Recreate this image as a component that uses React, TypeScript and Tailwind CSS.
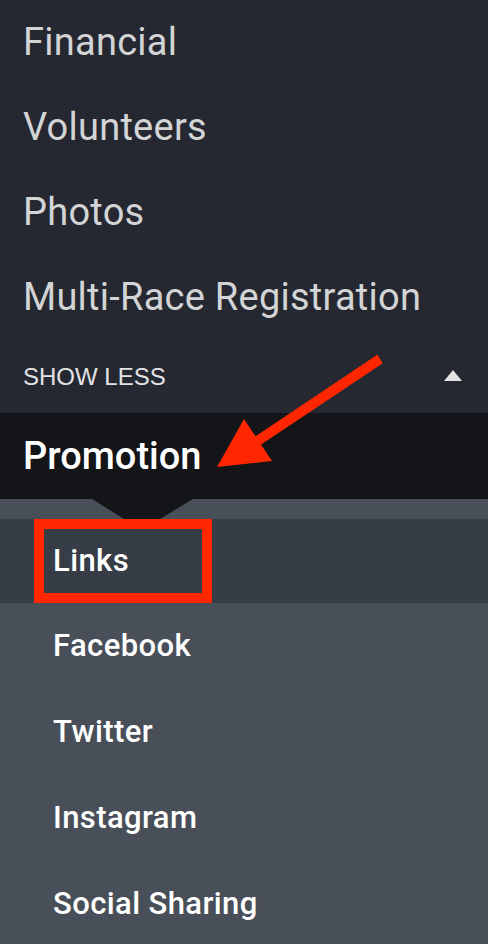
import { ReactNode } from "react";

const topItems = ["Financial", "Volunteers", "Photos", "Multi-Race Registration"];
const subItems = ["Facebook", "Twitter", "Instagram", "Social Sharing"];

function TopRow({ children }: { children: ReactNode }) {
    return (
        <div className="h-[85px] flex items-center pl-[23px] text-[38px] text-[#d3d4d6] tracking-[0.25px]">
            {children}
        </div>
    );
}

function SubRow({ children }: { children: ReactNode }) {
    return (
        <div className="h-[86px] flex items-center pl-[53px] text-[31px] font-medium text-white tracking-[0.4px]">
            {children}
        </div>
    );
}

export default function App() {
    return (
        <div
            className="relative w-[488px] h-[944px] overflow-hidden bg-[#494f59]"
            style={{ fontFamily: "Roboto, 'Liberation Sans', sans-serif" }}
        >
            {/* main nav */}
            <div className="bg-[#252830]">
                {topItems.map((t) => (
                    <TopRow key={t}>{t}</TopRow>
                ))}
                <div className="h-[73px] flex items-center justify-between pl-[23px] pr-[26px]">
                    <span
                        className="text-[24px] text-[#e2e3e5]"
                        style={{ fontFamily: "'Liberation Sans', Arial, sans-serif" }}
                    >
                        SHOW LESS
                    </span>
                    <svg width="18" height="11" viewBox="0 0 18 11" className="mb-[2px]">
                        <polygon points="9,0 18,11 0,11" fill="#e4e4e4" />
                    </svg>
                </div>
            </div>

            {/* active section */}
            <div className="h-[86px] bg-[#141519] flex items-center pl-[23px] text-[38px] font-medium text-white">
                Promotion
            </div>

            {/* notch strip */}
            <div className="h-[20px] bg-[#494f59]">
                <svg width="488" height="20" viewBox="0 0 488 20" className="block">
                    <polygon points="92,0 193,0 160,20 124,20" fill="#141519" />
                </svg>
            </div>

            {/* selected sub item */}
            <div className="h-[84px] bg-[#373d46] flex items-stretch pl-[34px]">
                <div className="w-[178px] border-[10px] border-[#ff2600] flex items-center pl-[9px] text-[31px] font-medium text-white tracking-[0.4px]">
                    Links
                </div>
            </div>

            {subItems.map((t) => (
                <SubRow key={t}>{t}</SubRow>
            ))}

            {/* annotation arrow */}
            <svg
                className="absolute left-0 top-0 pointer-events-none"
                width="488"
                height="944"
                viewBox="0 0 488 944"
            >
                <line x1="380" y1="359" x2="250" y2="446" stroke="#ff2600" strokeWidth="10" />
                <polygon points="217,467 244,419 272,461" fill="#ff2600" />
            </svg>
        </div>
    );
}
